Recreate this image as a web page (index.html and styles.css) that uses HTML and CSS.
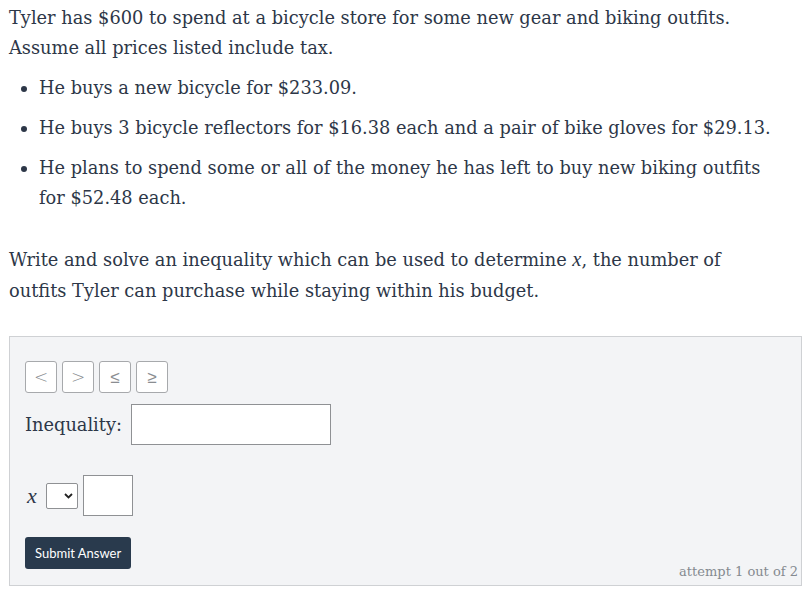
FILE: index.html
```html
<!DOCTYPE html>
<html>
<head>
<meta charset="utf-8">
<link rel="stylesheet" href="styles.css">
</head>
<body>
<div class="question">
  <p class="intro">Tyler has $600 to spend at a bicycle store for some new gear and biking outfits. Assume all prices listed include tax.</p>
  <ul class="items">
    <li>He buys a new bicycle for $233.09.</li>
    <li>He buys 3 bicycle reflectors for $16.38 each and a pair of bike gloves for $29.13.</li>
    <li>He plans to spend some or all of the money he has left to buy new biking outfits for $52.48 each.</li>
  </ul>
  <p class="task">Write and solve an inequality which can be used to determine <span class="var">x</span>, the number of outfits Tyler can purchase while staying within his budget.</p>
</div>
<div class="answer">
  <div class="symbols">
    <button class="sym">&lt;</button>
    <button class="sym">&gt;</button>
    <button class="sym">≤</button>
    <button class="sym">≥</button>
  </div>
  <div class="ineq-row">
    <span class="label">Inequality:</span>
    <span class="field wide"></span>
  </div>
  <div class="solve-row">
    <span class="var">x</span>
    <span class="select"><svg width="9" height="6" viewBox="0 0 9 6"><path d="M1 1 L4.5 4.5 L8 1" fill="none" stroke="#222" stroke-width="1.8"/></svg></span>
    <span class="field small"></span>
  </div>
  <div class="submit-row">
    <button class="submit">Submit Answer</button>
  </div>
  <div class="attempt">attempt 1 out of 2</div>
</div>
</body>
</html>
```
FILE: styles.css
```css
body {
  margin: 0;
  padding: 0 8px 0 9px;
  font-family: "DejaVu Serif", serif;
  color: #2d3748;
  background: #fff;
}
.question {
  font-size: 17.8px;
  line-height: 30px;
  width: 780px;
}
.intro {
  margin: 3px 0 0 0;
}
.items {
  margin: 10px 0 0 0;
  padding-left: 30px;
}
.items li {
  margin-bottom: 10px;
}
.task {
  margin: 31px 0 0 0;
  line-height: 31px;
  width: 745px;
}
.var {
  font-style: italic;
  font-family: "Liberation Serif", serif;
  font-size: 1.15em;
  line-height: 1;
}
.answer {
  margin-top: 30px;
  background: #f3f4f6;
  border: 1px solid #cfd1d4;
  padding: 24px 3px 0 15px;
  width: 773px;
  height: 224px;
  box-sizing: content-box;
}
.symbols {
  display: flex;
  gap: 5px;
}
.sym {
  width: 32px;
  height: 32px;
  background: #fff;
  border: 1px solid #a7a9ac;
  border-radius: 3px;
  color: #8a8d91;
  font-family: "DejaVu Sans", sans-serif;
  font-size: 17px;
  font-weight: 300;
  padding: 0;
}
.ineq-row {
  display: flex;
  align-items: center;
  gap: 9px;
  margin-top: 11px;
}
.label {
  font-size: 17.8px;
}
.field {
  display: block;
  background: #fff;
  border: 1px solid #8f9194;
  box-sizing: border-box;
  height: 41px;
}
.wide { width: 200px; }
.small { width: 50px; }
.solve-row {
  display: flex;
  align-items: center;
  gap: 5px;
  margin-top: 30px;
}
.solve-row .var {
  font-size: 22px;
  margin-left: 2px;
  margin-right: 4px;
}
.select {
  display: flex;
  align-items: center;
  justify-content: flex-end;
  box-sizing: border-box;
  width: 32px;
  height: 26px;
  background: #fff;
  border: 1px solid #8f9194;
  border-radius: 2px;
  padding-right: 4px;
}
.submit-row {
  margin-top: 21px;
}
.submit {
  background: #293a4d;
  color: #fff;
  border: none;
  border-radius: 3px;
  height: 32px;
  padding: 0 10px;
  font-family: Lato, "Open Sans", sans-serif;
  font-size: 13px;
}
.attempt {
  text-align: right;
  font-size: 13px;
  color: #858a90;
  margin-top: -6px;
  line-height: 18px;
}
```
